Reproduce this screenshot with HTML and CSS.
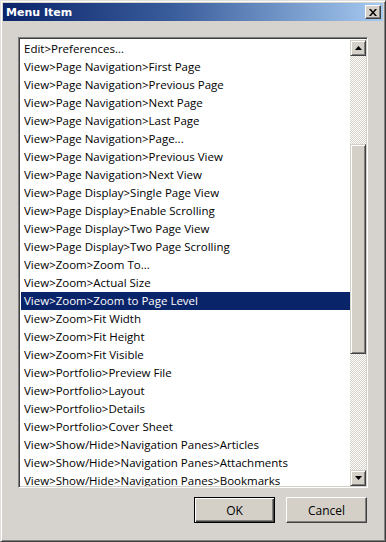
FILE: index.html
```html
<!DOCTYPE html>
<html lang="en">
<head>
  <meta charset="UTF-8">
  <title>Menu Item</title>
  <link rel="stylesheet" href="styles.css">
</head>
<body>
  <div class="window">
    <div class="titlebar">
      <span class="title">Menu Item</span>
      <span class="close">
        <svg width="8" height="7" viewBox="0 0 8 7"><path d="M0 0h2l2 2.5L6 0h2L5 3.5 8 7H6L4 4.5 2 7H0l3-3.5z" fill="#000"/></svg>
      </span>
    </div>
    <div class="content">
      <div class="listbox">
        <ul class="items">
          <li>Edit&gt;Preferences...</li>
          <li>View&gt;Page Navigation&gt;First Page</li>
          <li>View&gt;Page Navigation&gt;Previous Page</li>
          <li>View&gt;Page Navigation&gt;Next Page</li>
          <li>View&gt;Page Navigation&gt;Last Page</li>
          <li>View&gt;Page Navigation&gt;Page...</li>
          <li>View&gt;Page Navigation&gt;Previous View</li>
          <li>View&gt;Page Navigation&gt;Next View</li>
          <li>View&gt;Page Display&gt;Single Page View</li>
          <li>View&gt;Page Display&gt;Enable Scrolling</li>
          <li>View&gt;Page Display&gt;Two Page View</li>
          <li>View&gt;Page Display&gt;Two Page Scrolling</li>
          <li>View&gt;Zoom&gt;Zoom To...</li>
          <li>View&gt;Zoom&gt;Actual Size</li>
          <li class="selected">View&gt;Zoom&gt;Zoom to Page Level</li>
          <li>View&gt;Zoom&gt;Fit Width</li>
          <li>View&gt;Zoom&gt;Fit Height</li>
          <li>View&gt;Zoom&gt;Fit Visible</li>
          <li>View&gt;Portfolio&gt;Preview File</li>
          <li>View&gt;Portfolio&gt;Layout</li>
          <li>View&gt;Portfolio&gt;Details</li>
          <li>View&gt;Portfolio&gt;Cover Sheet</li>
          <li>View&gt;Show/Hide&gt;Navigation Panes&gt;Articles</li>
          <li>View&gt;Show/Hide&gt;Navigation Panes&gt;Attachments</li>
          <li>View&gt;Show/Hide&gt;Navigation Panes&gt;Bookmarks</li>
        </ul>
        <div class="scrollbar">
          <div class="arrow">
            <svg width="7" height="4" viewBox="0 0 7 4"><path d="M3.5 0L7 4H0z" fill="#000"/></svg>
          </div>
          <div class="track">
            <div class="thumb"></div>
          </div>
          <div class="arrow">
            <svg width="7" height="4" viewBox="0 0 7 4"><path d="M0 0h7L3.5 4z" fill="#000"/></svg>
          </div>
        </div>
      </div>
      <div class="buttons">
        <button class="btn default">OK</button>
        <button class="btn">Cancel</button>
      </div>
    </div>
  </div>
</body>
</html>
```
FILE: styles.css
```css
html, body {
  margin: 0;
  padding: 0;
}

body {
  font-family: "Open Sans", "Noto Sans", sans-serif;
  font-size: 11.5px;
  background: #d4d0c8;
}

.window {
  box-sizing: border-box;
  width: 386px;
  height: 542px;
  display: flex;
  flex-direction: column;
  background: #d6d3ce;
  border: 1px solid;
  border-color: #e2e0dc #404040 #404040 #e2e0dc;
  box-shadow: inset 1px 1px 0 #fff, inset -1px -1px 0 #808080;
  padding: 2px;
}

.titlebar {
  height: 18px;
  display: flex;
  align-items: center;
  justify-content: space-between;
  padding: 0 2px 0 3px;
  background: linear-gradient(to right, #0a246a 0%, #3a5d9c 45%, #a6caf0 100%);
}

.title {
  color: #fff;
  font-family: "DejaVu Sans", sans-serif;
  font-weight: bold;
  font-size: 11px;
}

.close {
  box-sizing: border-box;
  width: 16px;
  height: 14px;
  display: flex;
  align-items: center;
  justify-content: center;
  background: #d4d0c8;
  border: 1px solid;
  border-color: #fff #404040 #404040 #fff;
  box-shadow: inset -1px -1px 0 #808080;
}

.content {
  flex: 1;
  display: flex;
  flex-direction: column;
  padding: 16px 15px 15px 15px;
}

.listbox {
  height: 451px;
  box-sizing: border-box;
  display: flex;
  background: #fff;
  border: 1px solid;
  border-color: #808080 #fff #fff #808080;
  box-shadow: inset 1px 1px 0 #404040, inset -1px -1px 0 #d4d0c8;
  padding: 2px 1px 1px 2px;
}

.items {
  flex: 1;
  list-style: none;
  margin: 0;
  padding: 0;
  overflow: hidden;
  color: #000;
}

.items li {
  height: 18px;
  line-height: 18px;
  padding-left: 3px;
  white-space: nowrap;
}

.items li.selected {
  background: #0a246a;
  color: #fff;
}

.scrollbar {
  width: 16px;
  display: flex;
  flex-direction: column;
}

.arrow {
  box-sizing: border-box;
  height: 16px;
  display: flex;
  align-items: center;
  justify-content: center;
  background: #d4d0c8;
  border: 1px solid;
  border-color: #d4d0c8 #404040 #404040 #d4d0c8;
  box-shadow: inset 1px 1px 0 #fff, inset -1px -1px 0 #808080;
}

.track {
  flex: 1;
  background: repeating-conic-gradient(#d4d0c8 0 25%, #fff 0 50%) 0 0 / 2px 2px;
}

.thumb {
  box-sizing: border-box;
  margin-top: 88px;
  height: 210px;
  background: #d4d0c8;
  border: 1px solid;
  border-color: #d4d0c8 #404040 #404040 #d4d0c8;
  box-shadow: inset 1px 1px 0 #fff, inset -1px -1px 0 #808080;
}

.buttons {
  display: flex;
  justify-content: flex-end;
  gap: 11px;
  margin-top: 9px;
  padding-right: 1px;
}

.btn {
  box-sizing: border-box;
  width: 81px;
  height: 26px;
  font-family: "Open Sans", "Noto Sans", sans-serif;
  font-size: 12px;
  color: #000;
  background: #d4d0c8;
  border: 1px solid;
  border-color: #fff #404040 #404040 #fff;
  box-shadow: inset -1px -1px 0 #808080;
  padding: 0;
}

.btn.default {
  border: 1px solid #000;
  box-shadow: inset 1px 1px 0 #fff, inset -1px -1px 0 #404040, inset -2px -2px 0 #808080;
}
```
